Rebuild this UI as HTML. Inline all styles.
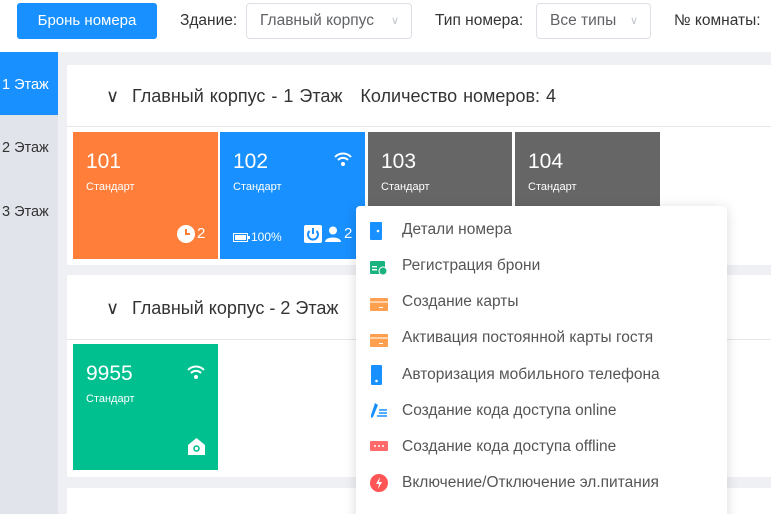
<!DOCTYPE html>
<html><head><meta charset="utf-8"><style>
*{box-sizing:border-box;margin:0;padding:0}
html,body{width:771px;height:514px;overflow:hidden}
body{background:#eef0f4;font-family:"Liberation Sans",sans-serif;position:relative;color:#333}
.a{position:absolute}
.top{left:0;top:0;width:771px;height:52px;background:#fff}
.btn{left:17px;top:3px;width:140px;height:36px;background:#1890ff;border-radius:3px;color:#fff;font-size:15px;line-height:36px;text-align:center}
.lbl{font-size:15.5px;color:#333;top:12px}
.sel{top:3px;height:36px;border:1px solid #dcdfe6;border-radius:4px;font-size:15.5px;color:#606266;line-height:34px;padding-left:13px;background:#fff}
.sel i{position:absolute;right:12px;top:0;font-style:normal;color:#c0c4cc;font-size:11px}
.side{left:0;top:52px;width:58px;height:462px;background:#e1e4eb}
.si{left:0;width:58px;font-size:14.5px;color:#333;padding-left:2px}
.panel{background:#fff;border-radius:2px}
.hd{font-size:18px;color:#333}
.hr{height:1px;background:#e6e6e6}
.tile{color:#fff}
.tile .n{position:absolute;left:13px;top:18px;font-size:21px}
.tile .s{position:absolute;left:13px;top:49px;font-size:11px}
.menu{left:356px;top:206px;width:371px;height:320px;background:#fff;border-radius:4px;box-shadow:0 2px 12px rgba(0,0,0,.15)}
.mi{position:absolute;left:46px;font-size:15.5px;color:#555}
.ic{position:absolute;left:14px}
</style></head><body>
<div class="a top"></div>
<div class="a btn">Бронь номера</div>
<div class="a lbl" style="left:180px">Здание:</div>
<div class="a sel" style="left:246px;width:166px">Главный корпус<i>&#8744;</i></div>
<div class="a lbl" style="left:435px">Тип номера:</div>
<div class="a sel" style="left:536px;width:115px">Все типы<i>&#8744;</i></div>
<div class="a lbl" style="left:674px">№ комнаты:</div>

<div class="a side"></div>
<div class="a" style="left:0;top:52px;width:58px;height:63px;background:#1890ff"></div>
<div class="a si" style="top:77px;color:#fff">1 Этаж</div>
<div class="a si" style="top:140px">2 Этаж</div>
<div class="a si" style="top:204px">3 Этаж</div>

<div class="a panel" style="left:67px;top:65px;width:704px;height:200px"></div>
<div class="a hd" style="left:106px;top:86px">&#8744;</div>
<div class="a hd" style="left:132px;top:86px;word-spacing:1px">Главный корпус - 1 Этаж &nbsp;&nbsp;Количество номеров: 4</div>
<div class="a hr" style="left:67px;top:126px;width:704px"></div>

<div class="a tile" style="left:73px;top:132px;width:145px;height:127px;background:#ff7f3a"><div class="n">101</div><div class="s">Стандарт</div>
<svg class="a" style="left:104px;top:93px" width="18" height="18" viewBox="0 0 18 18"><circle cx="9" cy="9" r="9" fill="#fff"/><path d="M9 4v5h4" stroke="#ff7f3a" stroke-width="2" fill="none"/></svg><div class="a" style="left:124px;top:93px;font-size:15px">2</div></div>

<div class="a tile" style="left:220px;top:132px;width:145px;height:127px;background:#1890ff"><div class="n">102</div><div class="s">Стандарт</div>
<svg class="a" style="left:113px;top:20px" width="20" height="15" viewBox="0 0 20 15"><path d="M2 5a11 11 0 0 1 16 0M5 8a7 7 0 0 1 10 0" stroke="#fff" stroke-width="2" fill="none"/><circle cx="10" cy="12" r="2" fill="#fff"/></svg>
<svg class="a" style="left:13px;top:101px" width="17" height="9" viewBox="0 0 17 9"><rect x=".5" y=".5" width="14" height="8" fill="none" stroke="#fff"/><rect x="2" y="2" width="11" height="5" fill="#fff"/><rect x="15" y="3" width="2" height="3" fill="#fff"/></svg><div class="a" style="left:31px;top:98px;font-size:12px">100%</div>
<svg class="a" style="left:84px;top:93px" width="18" height="18" viewBox="0 0 18 18"><rect width="18" height="18" fill="#fff" rx="2"/><path d="M5.5 6a5 5 0 1 0 7 0M9 3v6" stroke="#1890ff" stroke-width="2" fill="none"/></svg>
<svg class="a" style="left:105px;top:94px" width="16" height="16" viewBox="0 0 16 16"><circle cx="8" cy="4.5" r="4" fill="#fff"/><path d="M0 16c0-6 16-6 16 0z" fill="#fff"/></svg><div class="a" style="left:124px;top:93px;font-size:15px">2</div></div>

<div class="a tile" style="left:368px;top:132px;width:144px;height:127px;background:#666"><div class="n">103</div><div class="s">Стандарт</div></div>
<div class="a tile" style="left:515px;top:132px;width:145px;height:127px;background:#666"><div class="n">104</div><div class="s">Стандарт</div></div>

<div class="a panel" style="left:67px;top:275px;width:704px;height:202px"></div>
<div class="a hd" style="left:106px;top:298px">&#8744;</div>
<div class="a hd" style="left:132px;top:298px">Главный корпус - 2 Этаж</div>
<div class="a hr" style="left:67px;top:339px;width:704px"></div>
<div class="a tile" style="left:73px;top:344px;width:145px;height:126px;background:#00c08f"><div class="n">9955</div><div class="s">Стандарт</div>
<svg class="a" style="left:113px;top:21px" width="20" height="15" viewBox="0 0 20 15"><path d="M2 5a11 11 0 0 1 16 0M5 8a7 7 0 0 1 10 0" stroke="#fff" stroke-width="2" fill="none"/><circle cx="10" cy="12" r="2" fill="#fff"/></svg>
<svg class="a" style="left:115px;top:94px" width="17" height="17" viewBox="0 0 17 17"><path d="M0 7L8.5 0L17 7V17H0z" fill="#fff"/><circle cx="8.5" cy="10.5" r="2.5" fill="none" stroke="#00c08f" stroke-width="1.6"/></svg></div>

<div class="a panel" style="left:67px;top:488px;width:704px;height:40px"></div>

<div class="a menu">
<svg class="ic" style="top:16px" width="12" height="18" viewBox="0 0 12 18"><rect width="12" height="18" rx="1" fill="#1890ff"/><circle cx="8" cy="9" r="1.3" fill="#fff"/></svg><div class="mi" style="top:15px">Детали номера</div>
<svg class="ic" style="top:53px" width="18" height="17" viewBox="0 0 18 17"><rect y="2" width="15" height="13" rx="1" fill="#19b37f"/><rect x="2" y="7" width="5" height="1.4" fill="#fff"/><rect x="2" y="10" width="5" height="1.4" fill="#fff"/><circle cx="13" cy="12" r="4" fill="#19b37f" stroke="#fff"/></svg><div class="mi" style="top:51px">Регистрация брони</div>
<svg class="ic" style="top:92px" width="18" height="13" viewBox="0 0 18 13"><rect width="18" height="13" rx="1" fill="#ff9f50"/><rect y="3" width="18" height="2" fill="#ffd2a8"/><rect x="9" y="9" width="4" height="1" fill="#fff"/></svg><div class="mi" style="top:87px">Создание карты</div>
<svg class="ic" style="top:128px" width="18" height="13" viewBox="0 0 18 13"><rect width="18" height="13" rx="1" fill="#ff9f50"/><rect y="3" width="18" height="2" fill="#ffd2a8"/><rect x="9" y="9" width="4" height="1" fill="#fff"/></svg><div class="mi" style="top:123px">Активация постоянной карты гостя</div>
<svg class="ic" style="top:159px" width="12" height="20" viewBox="0 0 12 20"><rect x="1" width="11" height="20" rx="1" fill="#1890ff"/><circle cx="6.5" cy="16" r="1.3" fill="#fff"/></svg><div class="mi" style="top:160px">Авторизация мобильного телефона</div>
<svg class="ic" style="top:196px" width="18" height="17" viewBox="0 0 18 17"><path d="M5 1l3 2-5 12-2 1 0-3z" fill="#1890ff"/><path d="M9 8h8M9 11h8M7 14h10" stroke="#1890ff" stroke-width="1.4"/></svg><div class="mi" style="top:196px">Создание кода доступа online</div>
<svg class="ic" style="top:235px" width="18" height="10" viewBox="0 0 18 10"><rect width="18" height="10" rx="1" fill="#ff6a6a"/><circle cx="5" cy="5" r="1" fill="#fff"/><circle cx="9" cy="5" r="1" fill="#fff"/><circle cx="13" cy="5" r="1" fill="#fff"/></svg><div class="mi" style="top:232px">Создание кода доступа offline</div>
<svg class="ic" style="top:268px" width="18" height="18" viewBox="0 0 18 18"><circle cx="9" cy="9" r="9" fill="#f55"/><path d="M10 3L6 10h3l-1 5 4-7H9z" fill="#fff"/></svg><div class="mi" style="top:268px">Включение/Отключение эл.питания</div>
</div>
</body></html>
